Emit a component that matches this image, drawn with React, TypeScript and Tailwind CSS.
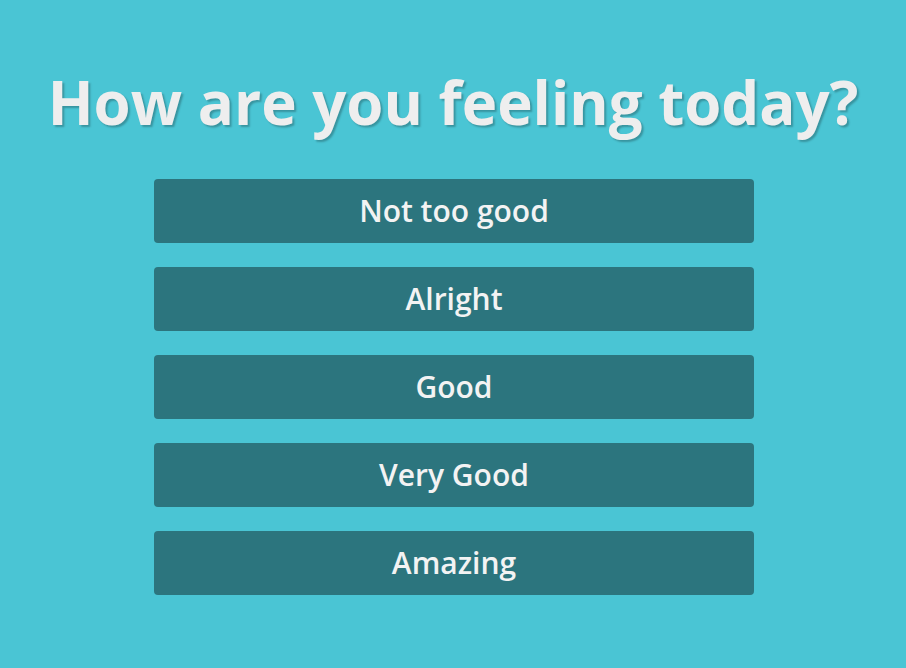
export default function App() {
  const items = ["Not too good", "Alright", "Good", "Very Good", "Amazing"];
  return (
    <div
      className="w-[906px] h-[668px] bg-[#4ac5d4] flex flex-col items-center"
      style={{ fontFamily: '"Open Sans", sans-serif' }}
    >
      <h1 className="mt-[62px] text-[60px] leading-[80px] font-bold text-[#eeeeee] [text-shadow:2px_2px_2px_rgba(0,0,0,0.25)]">
        How are you feeling today?
      </h1>
      <div className="mt-[37px] ml-[2px] flex flex-col gap-[24px]">
        {items.map((t) => (
          <button
            key={t}
            className="w-[600px] h-[64px] pb-[2px] rounded-[4px] bg-[#2c757e] text-[#f3f3f3] text-[30px] font-semibold flex items-center justify-center"
          >
            {t}
          </button>
        ))}
      </div>
    </div>
  );
}
